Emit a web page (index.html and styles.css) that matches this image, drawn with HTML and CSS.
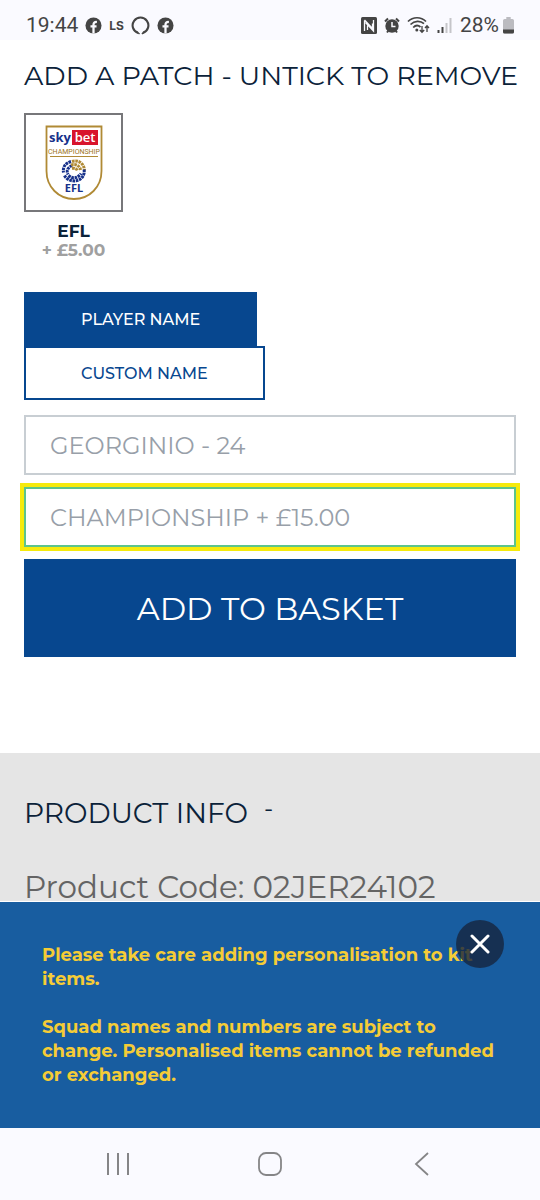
FILE: index.html
```html
<!DOCTYPE html>
<html lang="en">
<head>
    <meta charset="utf-8">
    <meta name="viewport" content="width=device-width, initial-scale=1">
    <title>Add a patch</title>
    <link rel="stylesheet" href="styles.css">
</head>
<body>
    <!-- Status bar -->
    <header class="status-bar">
        <div class="status-group">
            <span class="status-time">19:44</span>
            <svg width="17" height="17" viewBox="0 0 18 18">
                <circle cx="9" cy="9" r="8.500" fill="#444"/>
                <path d="M9 17.500V8.200c0-2.200 1-3.100 3.600-2.900M5.800 10h6.400" fill="none" stroke="#fafaff" stroke-width="2.400"/>
            </svg>
            <span class="status-ls">LS</span>
            <svg width="19" height="19" viewBox="0 0 20 20">
                <path d="M7.500 17.800a8.300 8.300 0 1 1 5 0" fill="none" stroke="#444" stroke-width="2.200"/>
                <path d="M6 16.500l3 2.500M14 16.500l-2.500 2.500" stroke="#444" stroke-width="1.500"/>
            </svg>
            <svg width="17" height="17" viewBox="0 0 18 18">
                <circle cx="9" cy="9" r="8.500" fill="#444"/>
                <path d="M9 17.500V8.200c0-2.200 1-3.100 3.600-2.900M5.800 10h6.400" fill="none" stroke="#fafaff" stroke-width="2.400"/>
            </svg>
        </div>
        <div class="status-group">
            <svg width="16" height="17" viewBox="0 0 16 17">
                <rect width="16" height="17" rx="1.500" fill="#444"/>
                <path d="M3.500 14V3.500M3.500 3l8 8.500V6.500M12.500 3v11L4.500 5.500M6.500 8.500V13" fill="none" stroke="#fafaff" stroke-width="1.300"/>
            </svg>
            <svg width="16" height="17" viewBox="0 0 16 17">
                <circle cx="8" cy="9" r="6.700" fill="#444"/>
                <path d="M1 4.500L4 1.500M15 4.500l-3-3M3 15.500l1.500-2M13 15.500l-1.500-2" stroke="#444" stroke-width="2"/>
                <path d="M8 5v4.500h3.500" fill="none" stroke="#fafaff" stroke-width="1.500"/>
            </svg>
            <svg width="23" height="18" viewBox="0 0 23 18">
                <g fill="none" stroke="#444" stroke-width="1.700">
                    <path d="M1 5.500c5-5 13-5 18 0M3.500 8.500c4-4 10-4 13.500-.8M6.200 11.500c2.200-2.300 5.200-2.300 7.300-.5"/>
                </g>
                <circle cx="9.800" cy="14" r="1.500" fill="#444"/>
                <path d="M15 10v6M12.800 14l2.200 2.300 2.200-2.300M20 16v-6M18 12l2-2.300 2 2.300" fill="none" stroke="#444" stroke-width="1.300"/>
            </svg>
            <svg width="16" height="17" viewBox="0 0 16 17">
                <path d="M1.500 13v3M5.500 10v6" stroke="#444" stroke-width="2"/>
                <path d="M9.500 6v10M13.500 1v15" stroke="#c5c5c9" stroke-width="2"/>
            </svg>
            <div class="status-battery">
                <span>28%</span>
                <svg width="11" height="17" viewBox="0 0 10 17" preserveAspectRatio="none">
                    <path d="M3 0h4v2h1.500Q10 2 10 3.500V15q0 1.500-1.500 1.500h-7Q0 16.500 0 15V3.500Q0 2 1.500 2H3z" fill="#bbbbc0"/>
                    <path d="M0 12.500h10V15q0 1.500-1.500 1.500h-7Q0 16.500 0 15z" fill="#444"/>
                </svg>
            </div>
        </div>
    </header>

    <main class="page">
        <form class="personalise">
            <h1 class="section-title">ADD A PATCH - UNTICK TO REMOVE</h1>

            <!-- Patch picker -->
            <label class="patch">
                <input type="checkbox" class="patch-input" name="patch" checked>
                <span class="patch-frame">
                    <svg width="58" height="76" viewBox="0 0 58 76">
                        <path d="M1.500 1.500h55V46c0 16-12 28-27.500 28S1.500 62 1.500 46z" fill="#fff" stroke="#b08a35" stroke-width="1.800"/>
                        <text class="badge-sky" x="4" y="17">sky</text>
                        <rect x="27" y="5" width="26" height="15" fill="#d8142c"/>
                        <text class="badge-bet" x="40" y="17" text-anchor="middle">bet</text>
                        <text class="badge-league" x="29" y="29" text-anchor="middle">CHAMPIONSHIP</text>
                        <path d="M5 31.500h48" stroke="#b08a35" stroke-width="1"/>
                        <!-- Football made of dots -->
                        <g fill="none" stroke-width="3" stroke-dasharray="2.600 .7">
                            <path d="M26 36.500c-5 1.500-8.500 5-7.500 11M27 40.500c-4 2-6 5-4 9" stroke="#17318a"/>
                            <path d="M19.500 50.500c3 6 14 8.500 19 0M23.500 50.500c4 3.500 9 3 12.500-2" stroke="#17318a"/>
                            <path d="M27 36.500c6-2 12 1.500 12.500 9M26 40c5-1.500 9 1 9.500 5M27 43.500c3-.5 5 .5 5.500 2.500" stroke="#b08a35"/>
                            <path d="M39 44.500c.5 2 .3 4-.8 6" stroke="#17318a"/>
                        </g>
                        <text class="badge-efl" x="29" y="67" text-anchor="middle">EFL</text>
                    </svg>
                </span>
                <span class="patch-name">EFL</span>
                <span class="patch-price">+ £5.00</span>
            </label>

            <div class="name-tabs">
                <button type="button" class="name-tab active">PLAYER NAME</button>
                <button type="button" class="name-tab">CUSTOM NAME</button>
            </div>

            <div class="fields">
                <select class="field" name="player" aria-label="Player">
                    <option>GEORGINIO - 24</option>
                </select>
                <select class="field highlighted" name="league" aria-label="League">
                    <option>CHAMPIONSHIP + £15.00</option>
                </select>
                <button type="submit" class="basket-button">ADD TO BASKET</button>
            </div>
        </form>

        <section class="product-info">
            <h2 class="info-title">PRODUCT INFO <span class="info-toggle">-</span></h2>
            <p class="product-code">Product Code: 02JER24102</p>
        </section>
    </main>

    <!-- Personalisation notice -->
    <aside class="notice">
        <p>Please take care adding personalisation to kit items.</p>
        <p>Squad names and numbers are subject to change. Personalised items cannot be refunded or exchanged.</p>
        <button type="button" class="notice-close" aria-label="Close">
            <svg width="20" height="20" viewBox="0 0 20 20">
                <path d="M2 2l16 16M18 2L2 18" stroke="#fff" stroke-width="3" stroke-linecap="round"/>
            </svg>
        </button>
    </aside>

    <nav class="nav-bar">
        <button type="button" class="nav-button" aria-label="Recent apps">
            <svg width="24" height="24" viewBox="0 0 24 24">
                <path d="M2 1v22M12 1v22M22 1v22" stroke="#858587" stroke-width="2"/>
            </svg>
        </button>
        <button type="button" class="nav-button" aria-label="Home">
            <svg width="24" height="24" viewBox="0 0 24 24">
                <rect x="1" y="1" width="22" height="22" rx="7" fill="none" stroke="#858587" stroke-width="1.800"/>
            </svg>
        </button>
        <button type="button" class="nav-button" aria-label="Back">
            <svg width="24" height="24" viewBox="0 0 24 24">
                <path d="M18 1L6 12l12 11" fill="none" stroke="#858587" stroke-width="1.800"/>
            </svg>
        </button>
    </nav>
</body>
</html>
```
FILE: styles.css
```css
* {
    box-sizing: border-box;
}

body {
    display: flex;
    flex-direction: column;
    height: 100vh;
    margin: 0;
    background-color: #fff;
    color: #0b2239;
    font-family: Montserrat, Inter, sans-serif;
}

h1, h2, p {
    margin: 0;
}

button, select {
    font-family: inherit;
    border-radius: 0;
    cursor: pointer;
}

svg {
    display: block;
    flex-shrink: 0;
}

/* Status bar */
.status-bar {
    display: flex;
    justify-content: space-between;
    align-items: center;
    flex-shrink: 0;
    height: 40px;
    padding: 10px 26px 0;
    background-color: #fafaff;
    color: #444;
    font-family: Roboto, sans-serif;
    font-size: 21px;
}

.status-group {
    display: flex;
    align-items: center;
    gap: 7px;
}

.status-ls {
    font-family: Inter, sans-serif;
    font-size: 12px;
    font-weight: 700;
}

.status-battery {
    display: flex;
    align-items: center;
    gap: 4px;
}

/* Page */
.page {
    flex: 1;
    min-height: 0;
    overflow: hidden;
}

.personalise {
    padding: 20px 24px 96px;
}

.section-title {
    font-size: 27px;
    font-weight: 400;
    line-height: 32px;
    white-space: nowrap;
}

/* Patch */
.patch {
    display: flex;
    flex-direction: column;
    align-items: center;
    position: relative;
    width: 99px;
    margin-top: 21px;
    font-size: 17px;
    font-weight: 700;
    line-height: 19px;
    cursor: pointer;
}

.patch-input {
    position: absolute;
    opacity: 0;
}

.patch-frame {
    display: flex;
    align-items: center;
    justify-content: center;
    width: 99px;
    height: 99px;
    margin-bottom: 10px;
    border: 2px solid #77777a;
}

.patch-price {
    color: #a0a0a0;
}

.badge-sky, .badge-bet {
    font-family: "Open Sans", sans-serif;
    font-size: 13px;
    font-weight: 700;
    fill: #17318a;
}

.badge-bet {
    font-weight: 600;
    fill: #fff;
}

.badge-league {
    font-family: Roboto, sans-serif;
    font-size: 7px;
    font-weight: 400;
    fill: #9c7420;
}

.badge-efl {
    font-family: "Noto Sans", sans-serif;
    font-size: 11px;
    font-weight: 700;
    fill: #17318a;
}

/* Name tabs */
.name-tabs {
    display: flex;
    flex-direction: column;
    align-items: flex-start;
    margin-top: 32px;
}

.name-tab {
    height: 54px;
    padding: 0 55px;
    border: 2px solid #07478f;
    background-color: #fff;
    color: #07478f;
    font-size: 16px;
    font-weight: 500;
}

.name-tab.active {
    background-color: #07478f;
    color: #fff;
}

/* Fields */
.fields {
    display: flex;
    flex-direction: column;
    gap: 12px;
    margin-top: 15px;
}

.field {
    appearance: none;
    width: 100%;
    height: 60px;
    padding: 0 24px;
    border: 2px solid #c8ced3;
    background-color: #fff;
    color: #989fa9;
    font-size: 24px;
    font-weight: 400;
}

.field.highlighted {
    border-color: #5cc48c;
    outline: 4px solid #f6ea0c;
}

.basket-button {
    height: 98px;
    border: none;
    background-color: #07478f;
    color: #fff;
    font-size: 32px;
    font-weight: 400;
}

/* Product info */
.product-info {
    padding: 38px 24px 0;
    background-color: #e5e5e5;
}

.info-title {
    display: flex;
    align-items: center;
    gap: 16px;
    font-size: 28px;
    font-weight: 400;
    line-height: 36px;
}

.info-toggle {
    padding-bottom: 8px;
    font-size: 24px;
}

.product-code {
    margin-top: 38px;
    color: #646464;
    font-size: 31px;
    line-height: 28px;
    white-space: nowrap;
}

/* Notice */
.notice {
    display: flex;
    flex-direction: column;
    gap: 24px;
    flex-shrink: 0;
    position: relative;
    padding: 41px 42px;
    background-color: #185da0;
    color: #f5cc36;
    font-size: 18px;
    font-weight: 700;
    line-height: 24px;
}

.notice-close {
    display: flex;
    align-items: center;
    justify-content: center;
    position: absolute;
    top: 18px;
    right: 36px;
    width: 48px;
    height: 48px;
    padding: 0;
    border: none;
    border-radius: 50%;
    background-color: rgba(22, 38, 62, 0.8);
}

/* Navigation bar */
.nav-bar {
    display: flex;
    justify-content: space-around;
    align-items: center;
    flex-shrink: 0;
    height: 72px;
    padding: 0 42px;
    background-color: #fafaff;
}

.nav-button {
    padding: 0;
    border: none;
    background: none;
}
```
